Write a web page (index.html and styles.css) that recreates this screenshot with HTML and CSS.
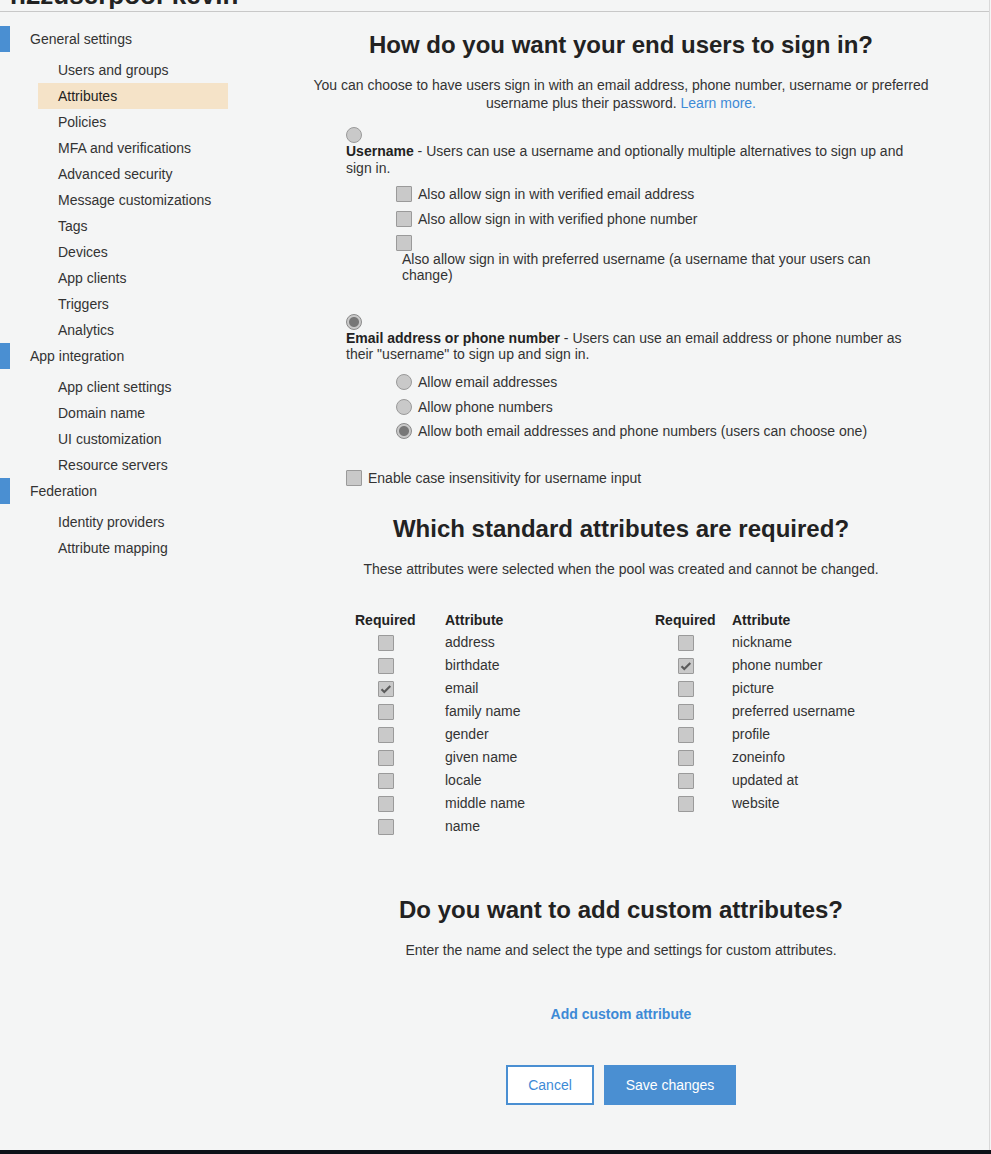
FILE: index.html
```html
<!DOCTYPE html>
<html lang="en">
<head>
<meta charset="utf-8">
<title>Attributes</title>
<link rel="stylesheet" href="styles.css">
</head>
<body>
<div class="app">
  <header class="topbar"><h1 class="pool-title">n2zuserpool-kevin</h1></header>
  <div class="layout">
    <nav class="sidebar">
      <div class="group"><span class="marker"></span><span class="group-label">General settings</span></div>
      <ul class="sublist">
        <li class="item">Users and groups</li>
        <li class="item active">Attributes</li>
        <li class="item">Policies</li>
        <li class="item">MFA and verifications</li>
        <li class="item">Advanced security</li>
        <li class="item">Message customizations</li>
        <li class="item">Tags</li>
        <li class="item">Devices</li>
        <li class="item">App clients</li>
        <li class="item">Triggers</li>
        <li class="item">Analytics</li>
      </ul>
      <div class="group"><span class="marker"></span><span class="group-label">App integration</span></div>
      <ul class="sublist">
        <li class="item">App client settings</li>
        <li class="item">Domain name</li>
        <li class="item">UI customization</li>
        <li class="item">Resource servers</li>
      </ul>
      <div class="group"><span class="marker"></span><span class="group-label">Federation</span></div>
      <ul class="sublist">
        <li class="item">Identity providers</li>
        <li class="item">Attribute mapping</li>
      </ul>
    </nav>
    <main class="main">
      <div class="column">
        <h2 class="heading first">How do you want your end users to sign in?</h2>
        <p class="lead">You can choose to have users sign in with an email address, phone number, username or preferred username plus their password. <a class="link" href="#">Learn more.</a></p>

        <div class="options">
          <div class="opt">
            <span class="radio"></span>
            <p class="opt-desc"><b>Username</b> - Users can use a username and optionally multiple alternatives to sign up and sign in.</p>
            <div class="suboptions">
              <div class="row"><span class="check"></span><span class="row-label">Also allow sign in with verified email address</span></div>
              <div class="row"><span class="check"></span><span class="row-label">Also allow sign in with verified phone number</span></div>
              <div class="row-stack"><span class="check"></span><span class="stack-label">Also allow sign in with preferred username (a username that your users can change)</span></div>
            </div>
          </div>

          <div class="opt second">
            <span class="radio on"></span>
            <p class="opt-desc tight"><b>Email address or phone number</b> - Users can use an email address or phone number as their "username" to sign up and sign in.</p>
            <div class="suboptions radios">
              <div class="row"><span class="radio"></span><span class="row-label">Allow email addresses</span></div>
              <div class="row"><span class="radio"></span><span class="row-label">Allow phone numbers</span></div>
              <div class="row"><span class="radio on"></span><span class="row-label">Allow both email addresses and phone numbers (users can choose one)</span></div>
            </div>
          </div>

          <div class="row case"><span class="check"></span><span class="row-label">Enable case insensitivity for username input</span></div>
        </div>

        <h2 class="heading attrs">Which standard attributes are required?</h2>
        <p class="lead">These attributes were selected when the pool was created and cannot be changed.</p>

        <div class="tables">
          <div class="attr-table">
            <div class="trow head"><span class="req-col">Required</span><span>Attribute</span></div>
            <div class="trow"><span class="req-col"><span class="check"></span></span><span>address</span></div>
            <div class="trow"><span class="req-col"><span class="check"></span></span><span>birthdate</span></div>
            <div class="trow"><span class="req-col"><span class="check checked"><svg viewBox="0 0 16 16" width="16" height="16"><path d="M3.5 8.3 L6.3 11 L12.3 5" fill="none" stroke="#5c5c5c" stroke-width="2.2"/></svg></span></span><span>email</span></div>
            <div class="trow"><span class="req-col"><span class="check"></span></span><span>family name</span></div>
            <div class="trow"><span class="req-col"><span class="check"></span></span><span>gender</span></div>
            <div class="trow"><span class="req-col"><span class="check"></span></span><span>given name</span></div>
            <div class="trow"><span class="req-col"><span class="check"></span></span><span>locale</span></div>
            <div class="trow"><span class="req-col"><span class="check"></span></span><span>middle name</span></div>
            <div class="trow"><span class="req-col"><span class="check"></span></span><span>name</span></div>
          </div>
          <div class="attr-table right">
            <div class="trow head"><span class="req-col">Required</span><span>Attribute</span></div>
            <div class="trow"><span class="req-col"><span class="check"></span></span><span>nickname</span></div>
            <div class="trow"><span class="req-col"><span class="check checked"><svg viewBox="0 0 16 16" width="16" height="16"><path d="M3.5 8.3 L6.3 11 L12.3 5" fill="none" stroke="#5c5c5c" stroke-width="2.2"/></svg></span></span><span>phone number</span></div>
            <div class="trow"><span class="req-col"><span class="check"></span></span><span>picture</span></div>
            <div class="trow"><span class="req-col"><span class="check"></span></span><span>preferred username</span></div>
            <div class="trow"><span class="req-col"><span class="check"></span></span><span>profile</span></div>
            <div class="trow"><span class="req-col"><span class="check"></span></span><span>zoneinfo</span></div>
            <div class="trow"><span class="req-col"><span class="check"></span></span><span>updated at</span></div>
            <div class="trow"><span class="req-col"><span class="check"></span></span><span>website</span></div>
          </div>
        </div>

        <h2 class="heading custom">Do you want to add custom attributes?</h2>
        <p class="lead">Enter the name and select the type and settings for custom attributes.</p>
        <p class="add"><a class="add-link" href="#">Add custom attribute</a></p>

        <div class="actions">
          <button class="btn cancel" type="button">Cancel</button>
          <button class="btn save" type="button">Save changes</button>
        </div>
      </div>
    </main>
  </div>
</div>
<div class="bottom-bar"></div>
</body>
</html>
```
FILE: styles.css
```css
* { box-sizing: border-box; }
html, body { margin: 0; padding: 0; }
body {
  background: #f4f5f5;
  font-family: "Liberation Sans", Arial, sans-serif;
  font-size: 14px;
  color: #333;
  width: 991px;
  height: 1154px;
  overflow: hidden;
}
.app {
  width: 990px;
  height: 1150px;
  border-right: 1px solid #d9d9d9;
  display: flex;
  flex-direction: column;
}
.topbar {
  height: 12px;
  border-bottom: 1px solid #c8c8c8;
  overflow: hidden;
  padding-left: 10px;
}
.pool-title {
  margin: -18px 0 0 0;
  font-size: 26px;
  line-height: 26px;
  font-weight: bold;
  color: #222;
  white-space: nowrap;
}
.layout { flex: 1; display: flex; }

/* Sidebar */
.sidebar { width: 253px; padding-top: 14px; flex-shrink: 0; }
.group { display: flex; align-items: center; height: 26px; }
.marker { width: 10px; height: 26px; background: #4a8fd2; }
.group-label { padding-left: 20px; color: #333; }
.sublist { list-style: none; margin: 0; padding: 5px 0 0 38px; }
.item { height: 26px; line-height: 26px; width: 190px; padding-left: 20px; color: #333; }
.item.active { background: #f5e3c8; color: #222; }

/* Main */
.main { flex: 1; }
.column { width: 640px; margin: 0 auto; }
.heading {
  margin: 0;
  text-align: center;
  font-size: 24px;
  line-height: 26px;
  font-weight: bold;
  color: #222;
}
.heading.first { margin-top: 20px; }
.lead {
  margin: 18px 0 0;
  text-align: center;
  line-height: 18px;
  color: #333;
}
.link, .add-link { color: #3d8ad6; text-decoration: none; }

.options { margin: 15px 0 0 45px; width: 575px; }
.opt-desc { margin: 0; line-height: 17px; color: #333; }
.opt-desc.tight { line-height: 16px; }
.opt-desc b { color: #222; }
.opt.second { margin-top: 31px; }
.suboptions { margin: 4px 0 0 50px; }
.suboptions.radios { margin-top: 8px; }
.row { display: flex; align-items: center; height: 25px; }
.suboptions.radios .row { height: 24.5px; }
.row-label { margin-left: 6px; }
.row-stack { padding-top: 4px; }
.row-stack .check { display: block; }
.stack-label { display: block; padding-left: 6px; line-height: 16px; }
.row.case { margin-top: 22px; }

.radio {
  display: block;
  width: 16px;
  height: 16px;
  border-radius: 50%;
  border: 1px solid #9a9a9a;
  background: #c9c9c9;
  flex-shrink: 0;
}
.radio.on {
  background: radial-gradient(circle, #777 0, #777 4.5px, #c9c9c9 5.5px);
  border-color: #8a8a8a;
}
.check {
  display: inline-block;
  width: 16px;
  height: 16px;
  border: 1px solid #9a9a9a;
  background: #c9c9c9;
  border-radius: 1px;
  flex-shrink: 0;
  position: relative;
  vertical-align: middle;
}
.check svg { position: absolute; left: -1px; top: -1px; }

/* Attribute tables */
.heading.attrs { margin-top: 25px; }
.tables { display: flex; margin: 31px 0 0 54px; }
.attr-table { width: 300px; flex-shrink: 0; }
.trow { display: flex; align-items: center; height: 23px; }
.trow.head { height: 22px; font-weight: bold; color: #222; }
.req-col { width: 90px; flex-shrink: 0; }
.attr-table.right .req-col { width: 77px; }
.req-col .check { margin-left: 23px; }

.heading.custom { margin-top: 59px; }
.add { margin: 46px 0 0; text-align: center; line-height: 18px; font-weight: bold; }
.actions { display: flex; justify-content: center; gap: 10px; margin-top: 42px; }
.btn {
  height: 40px;
  font-family: "Liberation Sans", Arial, sans-serif;
  font-size: 14px;
  cursor: pointer;
  border-radius: 0;
}
.btn.cancel { width: 88px; background: #fff; border: 2px solid #4a8fd2; color: #3d8ad6; }
.btn.save { width: 132px; background: #4a8fd2; border: 0; color: #fff; }

.bottom-bar { height: 4px; background: #0d1117; }
```
